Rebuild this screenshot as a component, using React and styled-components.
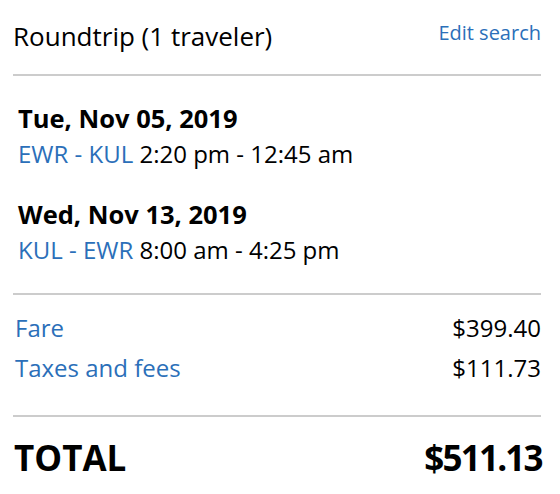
import React from 'react'
import styled, { createGlobalStyle } from 'styled-components'

const GlobalStyle = createGlobalStyle`
  html, body {
    margin: 0;
    padding: 0;
    background: #fff;
  }

  body {
    font-family: "Open Sans", "DejaVu Sans", sans-serif;
    color: #000;
  }
`

const colors = {
  link: '#2b6fb9',
  rule: '#cccccc',
}

const Summary = styled.section`
  width: 528px;
  padding: 0 19px 0 13px;
`

const Header = styled.header`
  display: flex;
  justify-content: space-between;
  align-items: flex-start;
  padding: 18px 0 20px;
  border-bottom: 2px solid ${colors.rule};
`

const Heading = styled.h2`
  margin: 0;
  font-size: 26px;
  line-height: 36px;
  font-weight: 400;
`

const EditLink = styled.a`
  &, &:link, &:visited {
    margin-top: 1px;
    font-size: 20px;
    line-height: 28px;
    color: ${colors.link};
    text-decoration: none;
  }
`

const Itinerary = styled.div`
  display: flex;
  flex-direction: column;
  gap: 24px;
  padding: 24px 0 25px 5px;
  border-bottom: 2px solid ${colors.rule};
`

const Leg = styled.div``

const LegDate = styled.h3`
  margin: 0;
  font-size: 25.5px;
  line-height: 36px;
  font-weight: 700;
`

const LegTimes = styled.p`
  margin: 0;
  font-size: 24px;
  line-height: 36px;
`

const Route = styled.span`
  color: ${colors.link};
`

const Fees = styled.dl`
  margin: 0;
  padding: 13px 0 27px 2px;
  border-bottom: 2px solid ${colors.rule};
`

const FeeRow = styled.div`
  display: flex;
  justify-content: space-between;
  font-size: 24px;
  line-height: 40px;
`

const FeeName = styled.dt`
  color: ${colors.link};
`

const FeeAmount = styled.dd`
  margin: 0;
`

const Total = styled.div`
  display: flex;
  justify-content: space-between;
  padding: 17px 0 0 1px;
  font-size: 35px;
  line-height: 48px;
  font-weight: 700;
`

const TotalAmount = styled.span`
  letter-spacing: -1.8px;
  margin-right: -0.8px;
`

const legs = [
  { date: 'Tue, Nov 05, 2019', route: 'EWR - KUL', times: '2:20 pm - 12:45 am' },
  { date: 'Wed, Nov 13, 2019', route: 'KUL - EWR', times: '8:00 am - 4:25 pm' },
]

const fees = [
  { name: 'Fare', amount: '$399.40' },
  { name: 'Taxes and fees', amount: '$111.73' },
]

const App = () => (
  <>
    <GlobalStyle />
    <Summary>
      <Header>
        <Heading>Roundtrip (1 traveler)</Heading>
        <EditLink href="#">Edit search</EditLink>
      </Header>

      <Itinerary>
        {legs.map(leg => (
          <Leg key={leg.date}>
            <LegDate>{leg.date}</LegDate>
            <LegTimes>
              <Route>{leg.route}</Route> {leg.times}
            </LegTimes>
          </Leg>
        ))}
      </Itinerary>

      <Fees>
        {fees.map(fee => (
          <FeeRow key={fee.name}>
            <FeeName>{fee.name}</FeeName>
            <FeeAmount>{fee.amount}</FeeAmount>
          </FeeRow>
        ))}
      </Fees>

      <Total>
        <span>TOTAL</span>
        <TotalAmount>$511.13</TotalAmount>
      </Total>
    </Summary>
  </>
)

export default App
